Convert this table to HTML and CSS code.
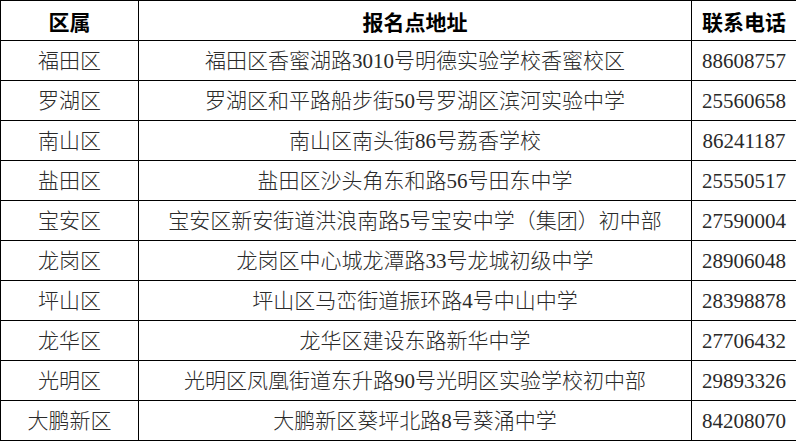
FILE: index.html
```html
<!DOCTYPE html>
<html lang="zh-CN">
<head>
<meta charset="utf-8">
<title>报名点</title>
<link rel="stylesheet" href="styles.css">
</head>
<body>
<table class="sites">
  <colgroup>
    <col class="c-area">
    <col class="c-addr">
    <col class="c-tel">
  </colgroup>
  <thead>
    <tr><th>区属</th><th>报名点地址</th><th>联系电话</th></tr>
  </thead>
  <tbody>
    <tr><td>福田区</td><td>福田区香蜜湖路3010号明德实验学校香蜜校区</td><td>88608757</td></tr>
    <tr><td>罗湖区</td><td>罗湖区和平路船步街50号罗湖区滨河实验中学</td><td>25560658</td></tr>
    <tr><td>南山区</td><td>南山区南头街86号荔香学校</td><td>86241187</td></tr>
    <tr><td>盐田区</td><td>盐田区沙头角东和路56号田东中学</td><td>25550517</td></tr>
    <tr><td>宝安区</td><td>宝安区新安街道洪浪南路5号宝安中学（集团）初中部</td><td>27590004</td></tr>
    <tr><td>龙岗区</td><td>龙岗区中心城龙潭路33号龙城初级中学</td><td>28906048</td></tr>
    <tr><td>坪山区</td><td>坪山区马峦街道振环路4号中山中学</td><td>28398878</td></tr>
    <tr><td>龙华区</td><td>龙华区建设东路新华中学</td><td>27706432</td></tr>
    <tr><td>光明区</td><td>光明区凤凰街道东升路90号光明区实验学校初中部</td><td>29893326</td></tr>
    <tr><td>大鹏新区</td><td>大鹏新区葵坪北路8号葵涌中学</td><td>84208070</td></tr>
  </tbody>
</table>
</body>
</html>
```
FILE: styles.css
```css
html, body {
  margin: 0;
  padding: 0;
  background: #fff;
}
.sites {
  border-collapse: collapse;
  table-layout: fixed;
  width: 796px;
  font-family: "Liberation Serif", "Noto Sans CJK SC", serif;
  font-size: 21px;
  color: #2a2a2a;
}
.c-area { width: 138px; }
.c-addr { width: 553px; }
.c-tel { width: 105px; }
.sites th,
.sites td {
  border: 1px solid #000;
  height: 39px;
  padding: 0;
  text-align: center;
  vertical-align: middle;
  line-height: 24px;
  white-space: nowrap;
}
.sites th {
  font-family: "Noto Sans CJK SC", sans-serif;
  font-weight: 700;
  color: #000;
}
.sites td {
  font-weight: 300;
}
```
